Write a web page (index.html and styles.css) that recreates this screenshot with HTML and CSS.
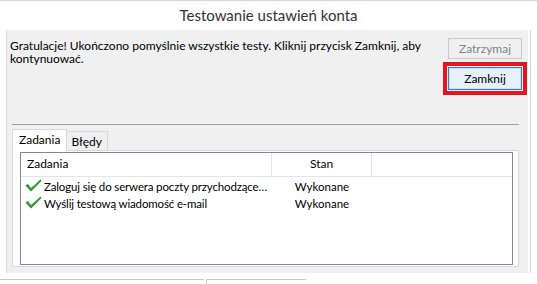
FILE: index.html
```html
<!DOCTYPE html>
<html lang="pl">
<head>
<meta charset="utf-8">
<title>Testowanie ustawień konta</title>
<link rel="stylesheet" href="styles.css">
</head>
<body>
<div class="screen">
  <div class="title">Testowanie ustawień konta</div>
  <div class="frame">
    <div class="panel">
      <div class="top">
        <p class="msg">Gratulacje! Ukończono pomyślnie wszystkie testy. Kliknij przycisk Zamknij, aby kontynuować.</p>
        <div class="actions">
          <button class="btn disabled" type="button">Zatrzymaj</button>
          <button class="btn default marked" type="button">Zamknij</button>
        </div>
      </div>
      <div class="sep"></div>
      <div class="tabs">
        <div class="tab active">Zadania</div>
        <div class="tab">Błędy</div>
      </div>
      <div class="tabpage">
        <div class="list">
          <div class="head">
            <div class="hcol c1">Zadania</div>
            <div class="hcol c2">Stan</div>
            <div class="hcol c3"></div>
          </div>
          <div class="row">
            <div class="cell c1">
              <svg class="check" viewBox="0 0 17 13" width="17" height="13"><path d="M0.5 6.5 L3 5 L6 9 L15.5 0.5 L16.5 2 L6 12.5 Z" fill="#2f8f2f"/><path d="M3 5.6 L6 9.6 L15.5 1.2" stroke="#5cc05c" stroke-width="0.8" fill="none"/></svg>
              <span class="txt">Zaloguj się do serwera poczty przychodzące…</span>
            </div>
            <div class="cell c2">Wykonane</div>
          </div>
          <div class="row">
            <div class="cell c1">
              <svg class="check" viewBox="0 0 17 13" width="17" height="13"><path d="M0.5 6.5 L3 5 L6 9 L15.5 0.5 L16.5 2 L6 12.5 Z" fill="#2f8f2f"/><path d="M3 5.6 L6 9.6 L15.5 1.2" stroke="#5cc05c" stroke-width="0.8" fill="none"/></svg>
              <span class="txt">Wyślij testową wiadomość e-mail</span>
            </div>
            <div class="cell c2">Wykonane</div>
          </div>
        </div>
      </div>
    </div>
  </div>
  <div class="under">
    <div class="under-a"></div>
    <div class="under-b"></div>
  </div>
</div>
</body>
</html>
```

FILE: styles.css
```css
* { box-sizing: border-box; }
html, body { margin: 0; padding: 0; background: #fff; }
body {
  font-family: Lato, "Noto Sans", "Liberation Sans", sans-serif;
  font-size: 12px;
  color: #000;
}
.screen {
  width: 537px;
  height: 284px;
  overflow: hidden;
  border-top: 1px solid #d8d8d8;
  background: #fff;
}
.title {
  height: 29px;
  text-align: center;
  font-size: 15px;
  line-height: 29px;
  color: #333;
}
.frame {
  width: 531px;
  border-right: 1px solid #d6d6d6;
  padding-left: 6px;
  padding-right: 2px;
}
.panel {
  height: 243px;
  background: #f0f0f0;
  border-left: 1px solid #dcdcdc;
  display: flex;
  flex-direction: column;
}
.top {
  display: flex;
  justify-content: space-between;
  height: 94px;
}
.msg {
  margin: 0;
  padding: 9px 0 0 3px;
  width: 425px;
  line-height: 13px;
}
.actions {
  display: flex;
  flex-direction: column;
  gap: 8px;
  padding-top: 8px;
  padding-right: 6px;
}
.btn {
  width: 74px;
  font-family: inherit;
  font-size: 12px;
  margin: 0;
  padding: 0;
}
.btn.disabled {
  height: 21px;
  background: #f0f0f0;
  border: 1px solid #c9c9c9;
  color: #838383;
}
.btn.default {
  height: 23px;
  background: #e5f1fb;
  border: 1px solid #3c7fb1;
  box-shadow: inset 0 0 0 1px #c7e0f4;
  color: #000;
}
.marked {
  outline: 4px solid #e4151f;
  outline-offset: 1px;
}
.sep {
  height: 1px;
  background: #a0a0a0;
  margin: 0 9px 0 5px;
}
.tabs {
  display: flex;
  align-items: flex-end;
  margin-top: 4px;
  padding-left: 5px;
  height: 21px;
}
.tab {
  border: 1px solid #d9d9d9;
  border-bottom: none;
  padding: 0 5px 0 4px;
  height: 19px;
  line-height: 19px;
  background: #f0f0f0;
  margin-left: -1px;
}
.tab.active {
  background: #fff;
  padding: 0 6px;
  line-height: 20px;
  margin-left: 0;
  position: relative;
  z-index: 1;
  margin-bottom: -1px;
  height: 22px;
}
.tabpage {
  margin: 0 9px 0 5px;
  height: 117px;
  border: 1px solid #d9d9d9;
  background: #fcfcfc;
  padding: 1px 5px 1px 7px;
}
.list {
  height: 113px;
  background: #fff;
  border: 1px solid #828790;
}
.head {
  display: flex;
  height: 24px;
  border-bottom: 1px solid #e5e5e5;
}
.hcol {
  line-height: 22px;
  border-right: 1px solid #e5e5e5;
}
.c1 { width: 251px; padding-left: 6px; }
.c2 { width: 100px; text-align: center; }
.hcol.c3 { border-right: none; flex: 1; }
.row {
  display: flex;
  height: 17px;
  align-items: center;
}
.head + .row { margin-top: 1px; }
.cell { line-height: 17px; white-space: nowrap; font-size: 11.5px; }
.cell.c1 { display: flex; align-items: center; padding-left: 4px; }
.check { flex: none; margin-right: 2px; margin-top: -2px; }
.txt { letter-spacing: -0.15px; }
.under {
  display: flex;
  margin-top: 6px;
  height: 5px;
}
.under-a {
  width: 204px;
  border-top: 1px solid #c8c8c8;
}
.under-b {
  width: 100px;
  margin-left: 2px;
  border-top: 1px solid #c8c8c8;
  border-left: 1px solid #c8c8c8;
}
```
